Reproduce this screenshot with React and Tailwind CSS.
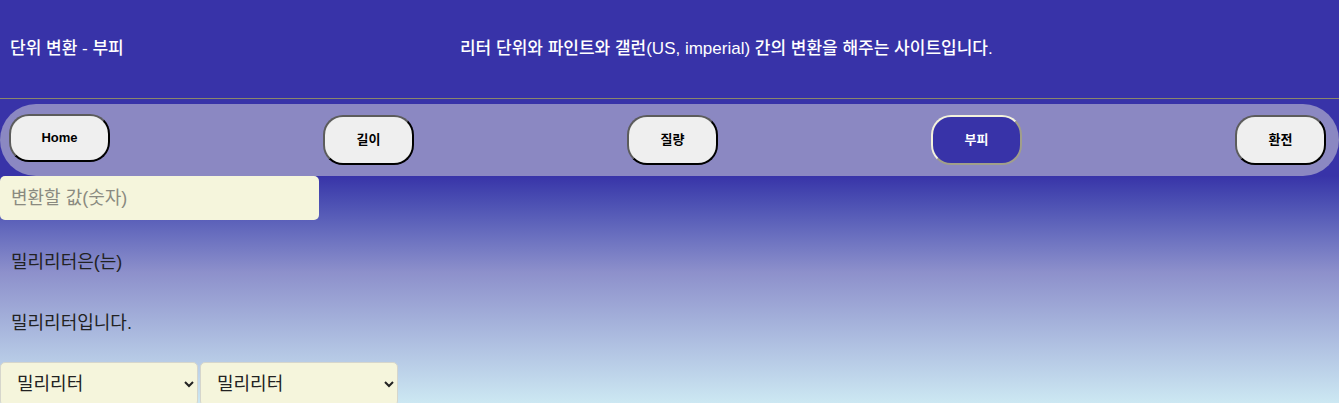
import React, { useState } from 'react';

const NAV = [
  { label: 'Home', w: 'w-[101px] h-[48px]' },
  { label: '길이', w: 'w-[91px] h-[50px] mt-[1px]' },
  { label: '질량', w: 'w-[91px] h-[50px] mt-[1px]' },
  { label: '부피', w: 'w-[91px] h-[50px] mt-[1px]', active: true },
  { label: '환전', w: 'w-[91px] h-[50px] mt-[1px]' },
];

const UNITS = ['밀리리터', '리터', '파인트(US)', '파인트(imperial)', '갤런(US)', '갤런(imperial)'];

const FONT = "font-['Liberation_Sans','Noto_Sans_CJK_KR',sans-serif]";

const App = () => {
  const [value, setValue] = useState('');
  const [from,  setFrom]  = useState(UNITS[0]);
  const [to,    setTo]    = useState(UNITS[0]);

  return (
    <div className={`${FONT} min-h-[403px] bg-[#3833a8] overflow-hidden`}>
      {/* header */}
      <header className="h-[98px] flex items-center text-white">
        <h1 className="pl-[10px] text-[17px] font-medium leading-[22px]">단위 변환 - 부피</h1>
        <p className="flex-1 pr-[10px] text-center text-[17px] font-medium leading-[22px]">
          리터 단위와 파인트와 갤런(US, imperial) 간의 변환을 해주는 사이트입니다.
        </p>
      </header>
      <div className="h-px bg-[#8b876a]" />

      {/* nav */}
      <nav className="mt-[5px] h-[72px] rounded-full bg-[#8b88c2] flex justify-between items-start pt-[10px] pl-[9px] pr-[13px]">
        {NAV.map((n) => (
          <button
            key={n.label}
            type="button"
            className={`${n.w} rounded-[20px] border-2 flex items-center justify-center text-[13px] font-bold leading-[16px] ${
              n.active
                ? 'bg-[#3833a8] text-white border-t-[#f3f2dc] border-l-[#f3f2dc] border-r-[#a19f8a] border-b-[#a19f8a]'
                : 'bg-[#efefef] text-black border-t-[#5c5c5c] border-l-[#5c5c5c] border-r-black border-b-black'
            }`}
          >
            {n.label}
          </button>
        ))}
      </nav>

      {/* converter */}
      <main className="h-[240px] bg-gradient-to-b from-[#3833a8] via-[#8d90cb] via-40% to-[#d3f1f6]">
        <input
          type="text"
          value={value}
          onChange={(e) => setValue(e.target.value)}
          placeholder="변환할 값(숫자)"
          className="block w-[319px] h-[44px] rounded-[5px] bg-[#f5f5dc] px-[11px] text-[18px] text-[#222] placeholder:text-[#8a8a80] outline-none"
        />
        <p className="mt-[29px] pl-[11px] text-[18px] leading-[27px] text-[#222]">{from}은(는)</p>
        <p className="mt-[34px] pl-[11px] text-[18px] leading-[27px] text-[#222]">{to}입니다.</p>
        <div className="mt-[25px] flex gap-[2px]">
          <select
            value={from}
            onChange={(e) => setFrom(e.target.value)}
            className="w-[198px] h-[44px] rounded-[5px] border border-[#d6d6cc] bg-[#f5f5dc] pl-[12px] pr-[6px] text-[18px] text-[#222]"
          >
            {UNITS.map((u) => <option key={u}>{u}</option>)}
          </select>
          <select
            value={to}
            onChange={(e) => setTo(e.target.value)}
            className="w-[198px] h-[44px] rounded-[5px] border border-[#d6d6cc] bg-[#f5f5dc] pl-[12px] pr-[6px] text-[18px] text-[#222]"
          >
            {UNITS.map((u) => <option key={u}>{u}</option>)}
          </select>
        </div>
      </main>
    </div>
  );
};

export default App;
